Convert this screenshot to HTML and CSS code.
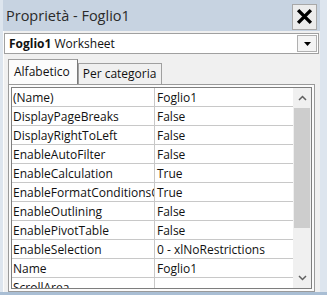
FILE: index.html
```html
<!DOCTYPE html>
<html lang="it">
<head>
  <meta charset="UTF-8" />
  <title>Proprietà - Foglio1</title>
  <link rel="stylesheet" href="styles.css">
</head>
<body>
  <div class="window">
    <div class="titlebar">
      <span class="title">Proprietà - Foglio1</span>
      <button class="close-btn" title="Chiudi">
        <svg width="17" height="17" viewBox="0 0 16 16">
          <path d="M2 2 L14 14 M14 2 L2 14" stroke="#000" stroke-width="3.2" fill="none"/>
        </svg>
      </button>
    </div>

    <div class="body">
      <div class="combo">
        <span class="combo-text"><b>Foglio1</b> Worksheet</span>
        <span class="combo-btn">
          <svg width="7" height="4" viewBox="0 0 7 4"><path d="M0 0 H7 L3.5 4 Z" fill="#000"/></svg>
        </span>
      </div>

      <div class="tabs">
        <div class="tab active">Alfabetico</div>
        <div class="tab">Per categoria</div>
      </div>

      <div class="grid">
        <div class="grid-inner">
          <div class="rows" id="rows"></div>
          <div class="scrollbar">
            <div class="sb-btn">
              <svg width="9" height="6" viewBox="0 0 9 6"><path d="M1 5 L4.5 1.5 L8 5" stroke="#606060" stroke-width="1.5" fill="none"/></svg>
            </div>
            <div class="sb-track">
              <div class="sb-thumb"></div>
            </div>
            <div class="sb-btn">
              <svg width="9" height="6" viewBox="0 0 9 6"><path d="M1 1 L4.5 4.5 L8 1" stroke="#606060" stroke-width="1.5" fill="none"/></svg>
            </div>
          </div>
        </div>
      </div>
    </div>
  </div>

  <script>
    const props = [
      ['(Name)', 'Foglio1'],
      ['DisplayPageBreaks', 'False'],
      ['DisplayRightToLeft', 'False'],
      ['EnableAutoFilter', 'False'],
      ['EnableCalculation', 'True'],
      ['EnableFormatConditionsCalculation', 'True'],
      ['EnableOutlining', 'False'],
      ['EnablePivotTable', 'False'],
      ['EnableSelection', '0 - xlNoRestrictions'],
      ['Name', 'Foglio1'],
      ['ScrollArea', '']
    ];

    const rows = document.getElementById('rows');
    props.forEach(([name, value]) => {
      const row = document.createElement('div');
      row.className = 'row';
      const n = document.createElement('div');
      n.className = 'cell name';
      n.textContent = name;
      const v = document.createElement('div');
      v.className = 'cell value';
      v.textContent = value;
      row.appendChild(n);
      row.appendChild(v);
      rows.appendChild(row);
    });
  </script>
</body>
</html>
```

FILE: styles.css
```css
body {
  margin: 0;
  padding: 0;
  background: #e4eaf1;
  font-family: "Open Sans", "Noto Sans", sans-serif;
}

.window {
  width: 327px;
  height: 295px;
  box-sizing: border-box;
  padding: 0 7px 0 3px;
  background: #dde5ee;
  border-bottom: 3px solid #a9bed4;
  overflow: hidden;
  display: flex;
  flex-direction: column;
}

.titlebar {
  height: 31px;
  background: #c7d3e1;
  display: flex;
  align-items: center;
  justify-content: space-between;
  padding: 0 3px 0 3px;
  flex-shrink: 0;
}

.title {
  font-size: 14.5px;
  color: #2a2a2a;
}

.close-btn {
  width: 25px;
  height: 26px;
  margin-top: 2px;
  background: #ececec;
  border: 1px solid #a8a8a8;
  padding: 0;
  display: flex;
  align-items: center;
  justify-content: center;
}

.body {
  flex: 1;
  background: #f0f0f0;
  border-left: 1px solid #fbfbfb;
  padding: 2px 0 0 0;
  display: flex;
  flex-direction: column;
  min-height: 0;
}

.combo {
  height: 19px;
  margin-right: 1px;
  background: #fff;
  border: 1px solid #a0a0a0;
  display: flex;
  align-items: center;
  justify-content: space-between;
  font-size: 12px;
  color: #111;
}

.combo-text {
  padding-left: 4px;
}

.combo-btn {
  width: 18px;
  height: 15px;
  margin-right: 1px;
  border: 1px solid #b0b0b0;
  background: #f4f4f4;
  display: flex;
  align-items: center;
  justify-content: center;
}

.tabs {
  display: flex;
  align-items: flex-end;
  margin: 5px 0 0 4px;
  height: 25px;
  flex-shrink: 0;
}

.tab {
  font-size: 12px;
  color: #111;
  background: #f0f0f0;
  border: 1px solid #a0a0a0;
  border-bottom: none;
  padding: 0 5px 0 4px;
  height: 20px;
  line-height: 19px;
}

.tab.active {
  height: 24px;
  line-height: 23px;
  background: #fcfcfc;
  border-right: 1px solid #7a7a7a;
  padding: 0 7px 0 5px;
}

.grid {
  flex: 1;
  min-height: 0;
  margin: 0 5px 0 4px;
  border: 1px solid #9a9a9a;
  padding: 2px;
  background: #fbfbfb;
}

.grid-inner {
  height: 100%;
  box-sizing: border-box;
  border: 1px solid #7e7e7e;
  background: #fff;
  display: flex;
  overflow: hidden;
}

.rows {
  flex: 1;
  min-width: 0;
}

.row {
  display: grid;
  grid-template-columns: 143px 1fr;
  height: 19px;
  border-bottom: 1px solid #c8c8c8;
  box-sizing: border-box;
}

.cell {
  font-size: 12px;
  color: #111;
  line-height: 19px;
  white-space: nowrap;
  overflow: hidden;
}

.name {
  padding-left: 1px;
  border-right: 1px solid #c8c8c8;
}

.value {
  padding-left: 2px;
}

.scrollbar {
  width: 18px;
  background: #f0f0f0;
  display: flex;
  flex-direction: column;
  flex-shrink: 0;
}

.sb-btn {
  height: 20px;
  display: flex;
  align-items: center;
  justify-content: center;
  flex-shrink: 0;
}

.sb-track {
  flex: 1;
}

.sb-thumb {
  height: 120px;
  margin: 0 1px;
  background: #cdcdcd;
}
```
